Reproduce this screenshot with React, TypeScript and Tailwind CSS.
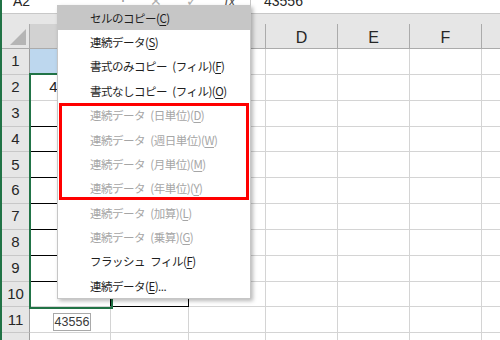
const COLS = ["A", "B", "C", "D", "E", "F", "G"];
const ROWS = [1, 2, 3, 4, 5, 6, 7, 8, 9, 10, 11, 12];

interface Item {
  label: string;
  key: string;
  tail?: string;
  disabled?: boolean;
}

const ITEMS: Item[] = [
  { label: "セルのコピー", key: "C" },
  { label: "連続データ", key: "S" },
  { label: "書式のみコピー (フィル)", key: "F" },
  { label: "書式なしコピー (フィル)", key: "O" },
  { label: "連続データ (日単位)", key: "D", disabled: true },
  { label: "連続データ (週日単位)", key: "W", disabled: true },
  { label: "連続データ (月単位)", key: "M", disabled: true },
  { label: "連続データ (年単位)", key: "Y", disabled: true },
  { label: "連続データ (加算)", key: "L", disabled: true },
  { label: "連続データ (乗算)", key: "G", disabled: true },
  { label: "フラッシュ フィル", key: "F" },
  { label: "連続データ", key: "E", tail: "..." },
];

function cellClass(row: number, col: number) {
  // col 0 = A, col 1 = B
  let cls = "h-[25.85px] border-r border-b border-[#d4d4d4] flex justify-center";
  cls += row === 10 && col === 1 ? " items-end pb-[1px]" : " items-center";
  if (row === 1 && col === 0) cls += " bg-[#bdd7ee]";
  else cls += " bg-white";
  if (row >= 3 && row <= 10 && col <= 1) cls += " !border-r-black";
  if (row >= 3 && row <= 9 && col === 0) cls += " !border-b-black";
  if (row === 10 && col === 1) cls += " !border-b-black";
  return cls;
}

function cellText(row: number, col: number) {
  if (row === 2 && col === 0) return "43556";
  if (row === 10 && col === 1) return "11";
  return "";
}

function FormulaBar() {
  return (
    <div className="h-[14px] shrink-0 overflow-hidden border-b border-[#c8c8c8] bg-white flex items-start text-[14px] leading-[22px] text-[#262626] font-['Liberation_Sans',sans-serif]">
      <div className="-mt-[10px] h-[22px] w-[100px] pl-[11px]">A2</div>
      <div className="-mt-[10px] h-[22px] w-[42px] text-center text-[#9a9a9a]">⋮</div>
      <div className="-mt-[10px] h-[22px] w-[24px] text-center text-[#b0b0b0]">✕</div>
      <div className="-mt-[10px] ml-[10px] h-[22px] w-[28px] text-center text-[#b0b0b0]">✓</div>
      <div className="-mt-[10px] ml-[14px] h-[22px] w-[20px] text-center italic text-[#555]">fx</div>
      <div className="ml-[10px] h-[14px] border-l border-[#c8c8c8]" />
      <div className="-mt-[10px] h-[22px] pl-[13px]">43556</div>
    </div>
  );
}

function Sheet() {
  return (
    <div className="grid w-[560px] grid-cols-[28px_81px_78px_77px_72px_72px_72px_80px] font-['Liberation_Sans',sans-serif]">
      <div className="relative h-[25px] border-r border-b border-[#ababab] bg-[#e6e6e6]">
        <svg className="absolute right-[3px] bottom-[3px]" width="16" height="16" viewBox="0 0 16 16">
          <polygon points="16,0 16,16 0,16" fill="#b5b5b5" />
        </svg>
      </div>
      {COLS.map((c, i) => (
        <div
          key={c}
          className={
            "h-[25px] border-r border-b border-[#ababab] flex items-center justify-center pt-[3px] text-[16px] text-[#262626] " +
            (i === 0 ? "bg-[#d2d2d2]" : "bg-[#e6e6e6]")
          }
        >
          {c}
        </div>
      ))}
      {ROWS.map((r) => (
        <Row key={r} r={r} />
      ))}
    </div>
  );
}

function Row({ r }: { r: number }) {
  return (
    <>
      <div className="h-[25.85px] border-r border-b border-r-[#9e9e9e] border-b-[#c8c8c8] bg-[#e6e6e6] flex items-center justify-center text-[15px] text-[#262626]">
        {r}
      </div>
      {COLS.map((c, i) => (
        <div key={c} className={cellClass(r, i) + " text-[15px] text-[#222]"}>
          {cellText(r, i)}
        </div>
      ))}
    </>
  );
}

function ContextMenu() {
  return (
    <div className="absolute left-[55px] top-[5px] w-[194px] h-[294px] border border-[#c6c6c6] bg-white shadow-[2px_2px_4px_rgba(0,0,0,0.28)] font-['Noto_Sans_CJK_JP',sans-serif] text-[11.5px] tracking-[-0.5px]">
      {ITEMS.map((it, i) => (
        <div
          key={i}
          className={
            "h-[24.4px] flex items-center pl-[32px] whitespace-pre " +
            (i === 0 ? "bg-[#c6c6c6] " : "") +
            (it.disabled ? "text-[#a6a6a6]" : "text-[#1e1e1e]")
          }
        >
          {it.label.replace(" ", "\u2002")}(<span className="underline underline-offset-2">{it.key}</span>){it.tail}
        </div>
      ))}
      <div className="absolute left-[1px] top-[97px] w-[190px] h-[97px] border-[3px] border-[#ff0000]" />
    </div>
  );
}

export default function App() {
  return (
    <div className="relative w-[500px] h-[340px] overflow-hidden bg-[#e6e6e6] border-l-2 border-[#217346] flex flex-col">
      <FormulaBar />
      <div className="h-[10px] shrink-0 bg-[#e6e6e6]" />
      <Sheet />

      {/* selection A2:A10 */}
      <div className="absolute left-[27px] top-[73px] w-[84px] h-[236px] border-2 border-[#217346]" />

      <ContextMenu />

      {/* fill tooltip */}
      <div className="absolute left-[51px] top-[313px] h-[18px] w-[38px] border border-[#a9a9a9] bg-white flex items-center justify-center font-['Liberation_Sans',sans-serif] text-[12.5px] text-[#3a3a3a]">
        43556
      </div>
    </div>
  );
}
